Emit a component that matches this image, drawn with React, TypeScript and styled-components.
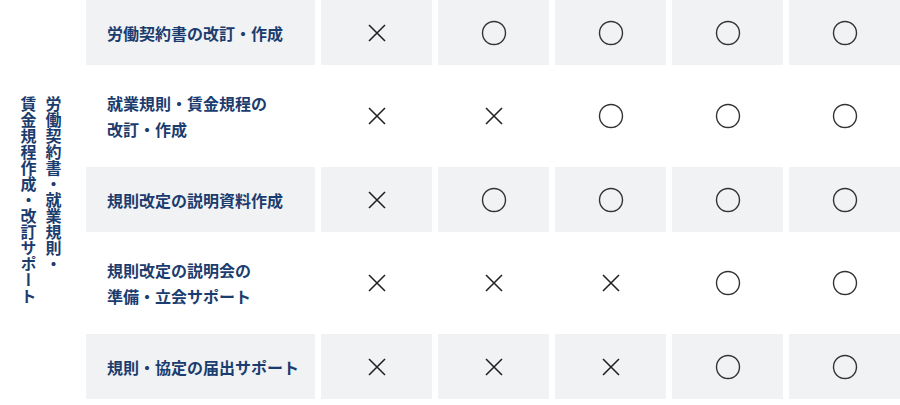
import React from "react";
import styled, { createGlobalStyle } from "styled-components";

const Global = createGlobalStyle`
  html, body { margin: 0; padding: 0; background: #fff; }
  body { font-family: "Noto Sans CJK JP", "Noto Sans", sans-serif; }
`;

const Table = styled.div`
  display: grid;
  grid-template-columns: 80px 229px repeat(5, 111px);
  grid-template-rows: 65px 90px 65px 90px 65px;
  gap: 6px;
  width: 900px;
`;

const Header = styled.div`
  grid-row: 1 / span 5;
  grid-column: 1;
  display: flex;
  align-items: center;
  justify-content: center;
`;

const VerticalText = styled.div`
  writing-mode: vertical-rl;
  font-size: 16px;
  line-height: 25px;
  font-weight: 700;
  color: #1b3c6e;
  margin-left: 1px;
`;

const Label = styled.div<{ $shaded: boolean }>`
  display: flex;
  align-items: center;
  padding-left: 21px;
  background: ${(p) => (p.$shaded ? "#f1f2f4" : "#fff")};
  font-size: 16px;
  line-height: 26px;
  font-weight: 700;
  color: #1b3c6e;
`;

const Cell = styled.div<{ $shaded: boolean }>`
  display: flex;
  align-items: center;
  justify-content: center;
  background: ${(p) => (p.$shaded ? "#f1f2f4" : "#fff")};
`;

const Circle = () => (
  <svg width="26" height="26" viewBox="0 0 26 26">
    <circle cx="13" cy="13" r="11.5" fill="none" stroke="#333" strokeWidth="1.4" />
  </svg>
);

const Cross = () => (
  <svg width="20" height="20" viewBox="0 0 20 20">
    <path d="M2 2 L18 18 M18 2 L2 18" stroke="#222" strokeWidth="1.6" fill="none" />
  </svg>
);

const rows: { label: React.ReactNode; marks: boolean[] }[] = [
  { label: "労働契約書の改訂・作成", marks: [false, true, true, true, true] },
  {
    label: (
      <>
        就業規則・賃金規程の
        <br />
        改訂・作成
      </>
    ),
    marks: [false, false, true, true, true],
  },
  { label: "規則改定の説明資料作成", marks: [false, true, true, true, true] },
  {
    label: (
      <>
        規則改定の説明会の
        <br />
        準備・立会サポート
      </>
    ),
    marks: [false, false, false, true, true],
  },
  { label: "規則・協定の届出サポート", marks: [false, false, false, true, true] },
];

export default function App() {
  return (
    <>
      <Global />
      <Table>
        <Header>
          <VerticalText>
            労働契約書・就業規則・
            <br />
            賃金規程作成・改訂サポート
          </VerticalText>
        </Header>
        {rows.map((r, i) => {
          const shaded = i % 2 === 0;
          return (
            <React.Fragment key={i}>
              <Label $shaded={shaded}>
                <span>{r.label}</span>
              </Label>
              {r.marks.map((m, j) => (
                <Cell key={j} $shaded={shaded}>
                  {m ? <Circle /> : <Cross />}
                </Cell>
              ))}
            </React.Fragment>
          );
        })}
      </Table>
    </>
  );
}
